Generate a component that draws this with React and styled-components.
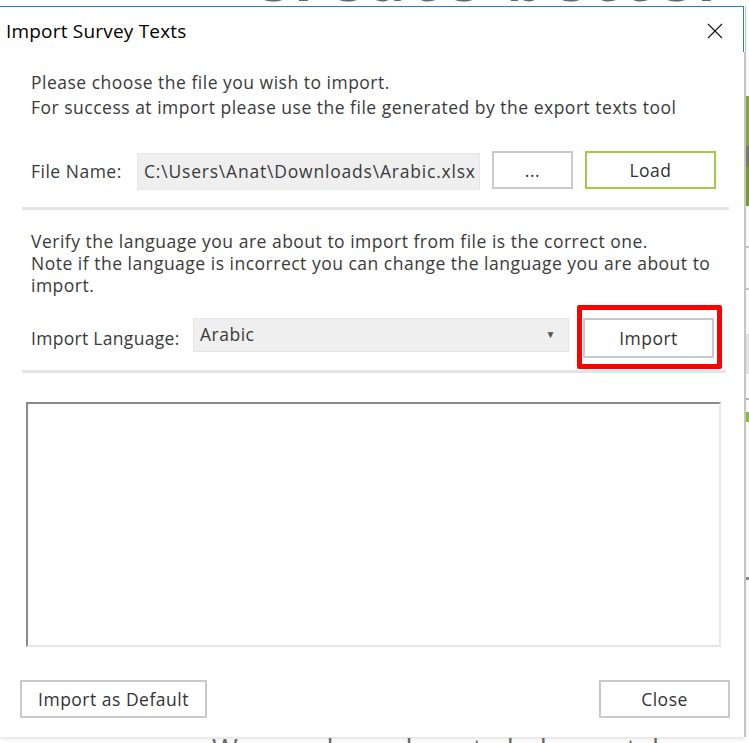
import React from "react";
import styled, { createGlobalStyle } from "styled-components";

const Global = createGlobalStyle`
  html, body { margin: 0; padding: 0; background: #ffffff; }
  body { font-family: "Open Sans", "Noto Sans", sans-serif; }
  * { box-sizing: border-box; }
`;

const Desktop = styled.div`
  width: 749px;
  height: 743px;
  overflow: hidden;
  background: #ffffff;
`;

/* background page header: only its lowest pixels peek out above the dialog */
const TopStrip = styled.div`
  height: 70px;
  margin-top: -64px;
  padding: 12px 0 0 250px;
`;

const BigHeading = styled.div`
  font-family: "Open Sans", sans-serif;
  font-size: 60px;
  font-weight: 700;
  color: #686868;
  line-height: 60px;
  white-space: nowrap;
  letter-spacing: 6px;
`;

const Middle = styled.div`
  height: 731px;
  display: flex;
`;

const SideStrip = styled.div`
  flex: 1;
  display: flex;
  flex-direction: column;
  background: #fdfdfd;
  border-left: 1px solid #d0d0d0;
`;

const SideBlock = styled.div`
  height: ${(p) => p.h}px;
  margin-top: ${(p) => p.mt || 0}px;
  background: ${(p) => p.c};
`;

const BottomStrip = styled.div`
  height: 40px;
  padding-left: 212px;
`;

const BottomText = styled.div`
  font-family: "Open Sans", sans-serif;
  font-size: 28px;
  line-height: 22px;
  color: #6a6a6a;
  white-space: nowrap;
`;

const Window = styled.div`
  width: 745px;
  flex: none;
  position: relative;
  z-index: 1;
  display: flex;
  flex-direction: column;
  background: #ffffff;
  box-shadow: 0 2px 4px rgba(0, 0, 0, 0.12);
`;

const TitleBar = styled.div`
  width: 744px;
  height: 46px;
  display: flex;
  align-items: center;
  justify-content: space-between;
  border-top: 1px solid #1883d7;
  border-right: 1px solid #1883d7;
  padding: 3px 20px 0 6px;
`;

const Title = styled.div`
  font-family: "Open Sans", sans-serif;
  font-size: 19px;
  letter-spacing: 0.2px;
  color: #000000;
`;

const CloseX = styled.svg`
  width: 16px;
  height: 16px;
  display: block;
`;

const Body = styled.div`
  flex: 1;
  display: flex;
  flex-direction: column;
  padding: 0 15px 0 22px;
  border-right: 1px solid #c4c4c4;
`;

const Paragraph = styled.div`
  font-size: 17.5px;
  letter-spacing: 0.5px;
  line-height: ${(p) => p.lh}px;
  color: #3a3a3a;
  padding-left: 9px;
  margin-top: ${(p) => p.mt}px;
`;

const Row = styled.div`
  display: flex;
  align-items: center;
  margin-top: ${(p) => p.mt}px;
  padding-left: 9px;
  height: ${(p) => p.h}px;
`;

const Label = styled.div`
  width: ${(p) => p.w}px;
  flex: none;
  font-size: 17.5px;
  letter-spacing: ${(p) => p.ls || 0.5}px;
  color: #3a3a3a;
  white-space: nowrap;
`;

const Field = styled.div`
  width: ${(p) => p.w}px;
  height: ${(p) => p.h}px;
  flex: none;
  background: #efefef;
  border: 1px solid #e6e6e6;
  display: flex;
  align-items: center;
  justify-content: space-between;
  padding: 0 12px 2px 6px;
  font-size: 17.5px;
  letter-spacing: ${(p) => p.ls || 0.5}px;
  color: #3a3a3a;
  white-space: nowrap;
  overflow: hidden;
  align-self: ${(p) => p.align || "center"};
`;

const Caret = styled.span`
  font-size: 10px;
  color: #555;
`;

const Button = styled.div`
  width: ${(p) => p.w}px;
  height: ${(p) => p.h || 38}px;
  flex: none;
  margin-left: ${(p) => p.ml || 0}px;
  border: ${(p) => (p.green ? "2px solid #a2cc47" : "2px solid #c9c9c9")};
  background: #ffffff;
  display: flex;
  align-items: center;
  justify-content: center;
  font-size: 17.5px;
  letter-spacing: 0.5px;
  color: #333;
  align-self: ${(p) => p.align || "center"};
`;

const Highlighted = styled.div`
  position: relative;
  margin-left: ${(p) => p.ml}px;
  align-self: flex-end;
`;

const RedFrame = styled.div`
  position: absolute;
  left: -6px;
  top: -13px;
  right: -8px;
  bottom: -11px;
  border: 5px solid #ff0000;
  border-radius: 2px;
  pointer-events: none;
`;

const Separator = styled.div`
  height: 3px;
  background: #e4e4e4;
  margin-top: ${(p) => p.mt}px;
  margin-right: ${(p) => p.mr || 0}px;
`;

const LogBox = styled.div`
  margin: 29px 8px 0 4px;
  height: 245px;
  border-top: 2px solid #8a8a8a;
  border-left: 2px solid #8a8a8a;
  border-right: 2px solid #e6e6e6;
  border-bottom: 2px solid #e6e6e6;
  background: #ffffff;
`;

const Footer = styled.div`
  display: flex;
  justify-content: space-between;
  margin: 33px -1px 0 -2px;
`;

export default function App() {
  return (
    <>
      <Global />
      <Desktop>
        <TopStrip>
          <BigHeading>Create better forms</BigHeading>
        </TopStrip>
        <Middle>
          <Window>
            <TitleBar>
              <Title>Import Survey Texts</Title>
              <CloseX viewBox="0 0 16 16">
                <path d="M1 1 L15 15 M15 1 L1 15" stroke="#111" strokeWidth="1.1" fill="none" />
              </CloseX>
            </TitleBar>
            <Body>
              <Paragraph mt={18} lh={25}>
                Please choose the file you wish to import.
                <br />
                For success at import please use the file generated by the export texts tool
              </Paragraph>
              <Row mt={31} h={39}>
                <Label w={106}>File Name:</Label>
                <Field w={343} h={37} align="flex-end" ls={0.8}>
                  C:\Users\Anat\Downloads\Arabic.xlsx
                </Field>
                <Button w={81} ml={12} align="flex-start">...</Button>
                <Button w={131} ml={12} green align="flex-start">Load</Button>
              </Row>
              <Separator mt={17} />
              <Paragraph mt={20} lh={22}>
                Verify the language you are about to import from file is the correct one.
                <br />
                Note if the language is incorrect you can change the language you are about to
                <br />
                import.
              </Paragraph>
              <Row mt={22} h={40}>
                <Label w={162} ls={0.3}>Import Language:</Label>
                <Field w={376} h={34} align="flex-start">
                  Arabic
                  <Caret>▼</Caret>
                </Field>
                <Highlighted ml={14}>
                  <Button w={131} h={40}>Import</Button>
                  <RedFrame />
                </Highlighted>
              </Row>
              <Separator mt={12} mr={3} />
              <LogBox />
              <Footer>
                <Button w={187}>Import as Default</Button>
                <Button w={131}>Close</Button>
              </Footer>
            </Body>
          </Window>
          <SideStrip>
            <SideBlock mt={90} h={50} c="#8aa83a" />
            <SideBlock h={20} c="#7c7c6a" />
            <SideBlock h={40} c="#7d9b2e" />
            <SideBlock mt={40} h={2} c="#c8c8c8" />
            <SideBlock mt={40} h={2} c="#c8c8c8" />
            <SideBlock mt={44} h={40} c="#e6e6e6" />
            <SideBlock mt={24} h={2} c="#b5b5b5" />
            <SideBlock mt={12} h={10} c="#8cbf3a" />
            <SideBlock mt={155} h={3} c="#8a8a8a" />
          </SideStrip>
        </Middle>
        <BottomStrip>
          <BottomText>We are always here to help you take your</BottomText>
        </BottomStrip>
      </Desktop>
    </>
  );
}
